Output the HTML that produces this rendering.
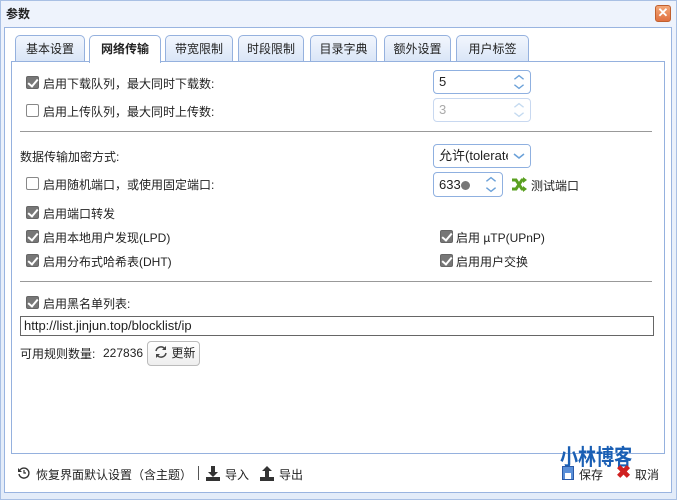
<!DOCTYPE html>
<html><head><meta charset="utf-8"><style>
*{margin:0;padding:0;box-sizing:border-box}
body{width:677px;height:500px;background:#e3ecf9;font-family:"Liberation Sans","Noto Sans CJK SC",sans-serif;font-size:12px;color:#222;position:relative;overflow:hidden}
.a{position:absolute;white-space:nowrap}
#win{position:absolute;left:0;top:0;width:677px;height:500px;border:1px solid #a9c0e4;background:linear-gradient(#eef3fc,#e3ecf9)}
#panel{position:absolute;left:4px;top:27px;width:668px;height:466px;background:#fff;border:1px solid #99b4e0}
.tab{position:absolute;top:35px;height:27px;border:1px solid #95b1de;border-bottom:none;border-radius:5px 5px 0 0;background:linear-gradient(#f2f6fd,#d9e5f7);text-align:center;line-height:26px;font-size:12px;color:#222}
.tab.on{background:#fff;height:28px;font-weight:bold;z-index:2}
#content{position:absolute;left:11px;top:61px;width:654px;height:393px;border:1px solid #95b1de;background:#fff}
.cb{position:absolute;width:13px;height:13px;border:1px solid #888;border-radius:2px;background:#fff}
.cb.on{background:#777;border-color:#666}
.cb.on:after{content:"";position:absolute;left:3px;top:0px;width:4px;height:8px;border:solid #fff;border-width:0 2px 2px 0;transform:rotate(40deg)}
.in{position:absolute;border:1px solid #8fb0e0;border-radius:4px;background:#fff;padding-left:5px;font-size:13px;line-height:21px}
.hr{position:absolute;left:20px;width:632px;height:1px;background:#999}
.spin{position:absolute;right:0;top:0;width:22px;height:100%;}
</style></head><body>
<div id="win"></div>
<div class="a" style="left:6px;top:5px;font-weight:bold;font-size:12px">参数</div>
<div class="a" style="left:655px;top:5px;width:16px;height:17px;border-radius:3px;background:linear-gradient(#f4a878,#e07040);border:1px solid #c0602f;color:#fff;font-size:13px;line-height:14px;text-align:center;font-weight:bold">✕</div>
<div id="panel"></div>
<div class="tab" style="left:15px;width:70px">基本设置</div>
<div class="tab on" style="left:89px;width:72px">网络传输</div>
<div class="tab" style="left:165px;width:68px">带宽限制</div>
<div class="tab" style="left:238px;width:66px">时段限制</div>
<div class="tab" style="left:310px;width:67px">目录字典</div>
<div class="tab" style="left:384px;width:67px">额外设置</div>
<div class="tab" style="left:456px;width:73px">用户标签</div>
<div id="content"></div>

<div class="cb on" style="left:26px;top:76px"></div><div class="a" style="left:43px;top:75px">启用下载队列，最大同时下载数:</div>
<div class="in" style="left:433px;top:70px;width:98px;height:24px">5<svg class="spin" viewBox="0 0 22 24"><path d="M6 9l5-4 5 4M6 15l5 4 5-4" stroke="#6aa0d8" stroke-width="1.5" fill="none"/></svg></div>
<div class="cb" style="left:26px;top:104px"></div><div class="a" style="left:43px;top:103px">启用上传队列，最大同时上传数:</div>
<div class="in" style="left:433px;top:98px;width:98px;height:24px;border-color:#c8d8f0;color:#aaa">3<svg class="spin" viewBox="0 0 22 24"><path d="M6 9l5-4 5 4M6 15l5 4 5-4" stroke="#c4daf0" stroke-width="1.5" fill="none"/></svg></div>
<div class="hr" style="top:131px"></div>

<div class="a" style="left:20px;top:148px">数据传输加密方式:</div>
<div class="in" style="left:433px;top:144px;width:98px;height:24px;overflow:hidden">允许(tolerated<div style="position:absolute;right:0;top:0;width:22px;height:22px;background:#fff"><svg viewBox="0 0 22 22" width="22" height="22"><path d="M6 9l5 4 5-4" stroke="#6aa0d8" stroke-width="1.5" fill="none"/></svg></div></div>
<div class="cb" style="left:26px;top:177px"></div><div class="a" style="left:43px;top:176px">启用随机端口，或使用固定端口:</div>
<div class="in" style="left:433px;top:172px;width:70px;height:25px;line-height:23px">633<span style="display:inline-block;width:9px;height:9px;border-radius:50%;background:#777;vertical-align:-1px"></span><svg class="spin" viewBox="0 0 22 25"><path d="M6 9l5-4 5 4M6 16l5 4 5-4" stroke="#6aa0d8" stroke-width="1.5" fill="none"/></svg></div>
<svg class="a" style="left:511px;top:177px" width="16" height="15" viewBox="0 0 16 15"><path d="M1 3h4l6 9h3M1 12h4l6-9h3" stroke="#5aa020" stroke-width="3" fill="none"/><path d="M12 0l4 3-4 3zM12 9l4 3-4 3z" fill="#5aa020"/></svg>
<div class="a" style="left:531px;top:177px">测试端口</div>

<div class="cb on" style="left:26px;top:206px"></div><div class="a" style="left:43px;top:205px">启用端口转发</div>
<div class="cb on" style="left:26px;top:230px"></div><div class="a" style="left:43px;top:229px">启用本地用户发现(LPD)</div>
<div class="cb on" style="left:440px;top:230px"></div><div class="a" style="left:456px;top:229px">启用 µTP(UPnP)</div>
<div class="cb on" style="left:26px;top:254px"></div><div class="a" style="left:43px;top:253px">启用分布式哈希表(DHT)</div>
<div class="cb on" style="left:440px;top:254px"></div><div class="a" style="left:456px;top:253px">启用用户交换</div>
<div class="hr" style="top:281px"></div>

<div class="cb on" style="left:26px;top:296px"></div><div class="a" style="left:43px;top:295px">启用黑名单列表:</div>
<div class="in" style="left:20px;top:316px;width:634px;height:20px;border-color:#666;border-radius:0;line-height:18px;padding-left:3px">http://list.jinjun.top/blocklist/ip</div>
<div class="a" style="left:20px;top:345px">可用规则数量:</div>
<div class="a" style="left:103px;top:346px">227836</div>
<div class="a" style="left:147px;top:341px;width:53px;height:25px;border:1px solid #bbb;border-radius:4px;background:linear-gradient(#fff,#eee);padding-left:6px;line-height:23px"><svg width="14" height="14" viewBox="0 0 14 14" style="vertical-align:-2px"><path d="M2 6a5 5 0 0 1 9-2M12 8a5 5 0 0 1-9 2" stroke="#444" stroke-width="1.5" fill="none"/><path d="M12 1v4h-4zM2 13V9h4z" fill="#444"/></svg> 更新</div>

<svg class="a" style="left:17px;top:466px" width="14" height="14" viewBox="0 0 14 14"><path d="M3 4a5 5 0 1 1-1 4" stroke="#333" stroke-width="1.4" fill="none"/><path d="M1 2v4h4z" fill="#333"/><path d="M7 4v3h2" stroke="#333" stroke-width="1.2" fill="none"/></svg>
<div class="a" style="left:36px;top:466px">恢复界面默认设置（含主题）</div>
<div class="a" style="left:198px;top:466px;width:1px;height:14px;background:#555"></div>
<svg class="a" style="left:205px;top:465px" width="16" height="16" viewBox="0 0 16 16"><path d="M6 1h4v6h3l-5 5-5-5h3z" fill="#333"/><rect x="1" y="12" width="14" height="4" fill="#333"/></svg>
<div class="a" style="left:225px;top:466px">导入</div>
<svg class="a" style="left:259px;top:465px" width="16" height="16" viewBox="0 0 16 16"><path d="M6 12h4V6h3L8 1 3 6h3z" fill="#333"/><rect x="1" y="12" width="14" height="4" fill="#333"/></svg>
<div class="a" style="left:279px;top:466px">导出</div>

<div class="a" style="left:560px;top:446px;font-size:22px;font-weight:bold;color:#1a5fb4;line-height:24px;transform:scaleX(0.82);transform-origin:left top">小林博客</div>
<div class="a" style="left:562px;top:466px;width:12px;height:14px;background:#5a8fd8;border:1px solid #2a5aa8"><div style="margin:6px 2px 0;height:6px;background:#fff"></div></div>
<div class="a" style="left:579px;top:466px">保存</div>
<div class="a" style="left:616px;top:462px;color:#d02020;font-size:18px;font-weight:bold;line-height:20px">✖</div>
<div class="a" style="left:635px;top:466px">取消</div>
</body></html>
